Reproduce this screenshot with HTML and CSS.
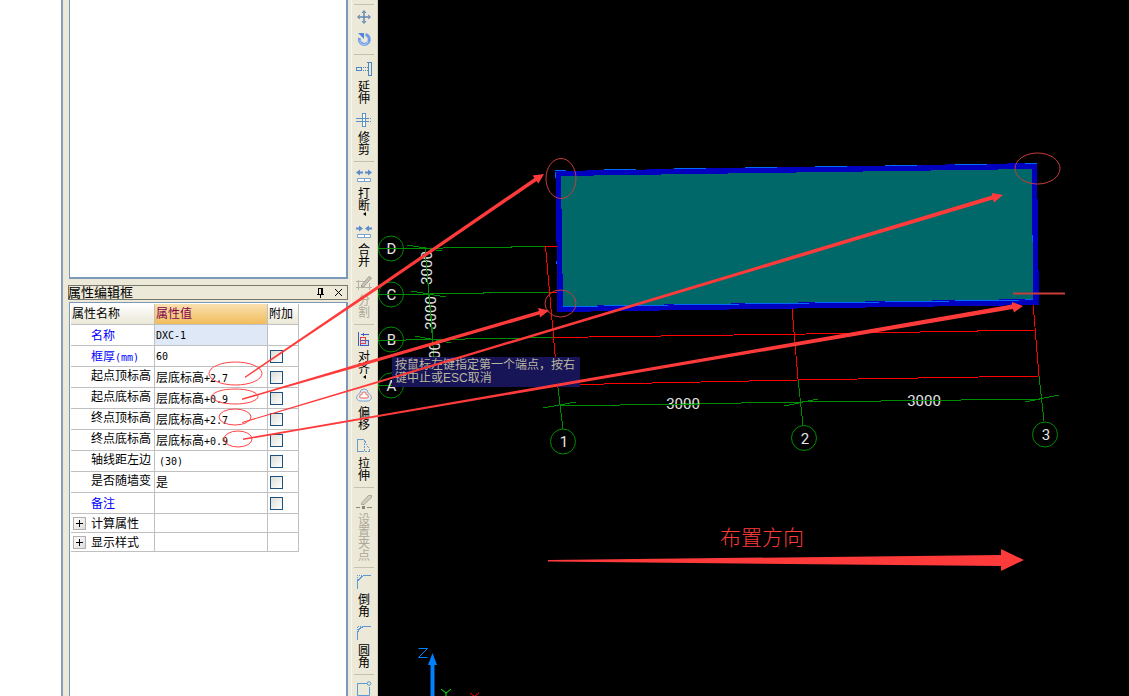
FILE: index.html
```html
<!DOCTYPE html>
<html lang="zh-CN">
<head>
<meta charset="utf-8">
<title>属性编辑框</title>
<link rel="stylesheet" href="styles.css">
</head>
<body>
<div class="app">
  <aside class="gutter"></aside>
  <section class="dock">
    <div class="list-panel"></div>
    <header class="panel-title">
      <h1>属性编辑框</h1>
      <button class="title-button" type="button" aria-label="固定"><svg width="9" height="10" viewBox="0 0 9 10" shape-rendering="crispEdges"><path d="M2 0h5v6h-1v-5h-3v5h-1zM5 1h1v5h-1zM1 6h7v1h-7zM4 7h1v3h-1z"/></svg></button>
      <button class="title-button" type="button" aria-label="关闭"><svg width="9" height="9" viewBox="0 0 9 9"><path d="M1 1l7 7M8 1l-7 7" stroke="#000"/></svg></button>
    </header>
    <div class="prop-panel">
      <table class="props">
        <colgroup><col class="col-name"><col class="col-value"><col class="col-extra"></colgroup>
        <thead><tr><th>属性名称</th><th class="active">属性值</th><th>附加</th></tr></thead>
        <tbody>
          <tr><td class="key link">名称</td><td class="selected mono">DXC-1</td><td></td></tr>
          <tr><td class="key link">框厚<span class="mono">(mm)</span></td><td class="mono">60</td><td><input type="checkbox" aria-label="框厚"></td></tr>
          <tr><td class="key raised">起点顶标高</td><td>层底标高<span class="mono">+2.7</span></td><td><input type="checkbox" aria-label="起点顶标高"></td></tr>
          <tr><td class="key raised">起点底标高</td><td>层底标高<span class="mono">+0.9</span></td><td><input type="checkbox" aria-label="起点底标高"></td></tr>
          <tr><td class="key raised">终点顶标高</td><td>层底标高<span class="mono">+2.7</span></td><td><input type="checkbox" aria-label="终点顶标高"></td></tr>
          <tr><td class="key raised">终点底标高</td><td>层底标高<span class="mono">+0.9</span></td><td><input type="checkbox" aria-label="终点底标高"></td></tr>
          <tr><td class="key raised">轴线距左边</td><td class="mono paren">(30)</td><td><input type="checkbox" aria-label="轴线距左边"></td></tr>
          <tr><td class="key raised">是否随墙变</td><td>是</td><td><input type="checkbox" aria-label="是否随墙变"></td></tr>
          <tr><td class="key link">备注</td><td></td><td><input type="checkbox" aria-label="备注"></td></tr>
          <tr class="group"><td><button type="button" class="expand" aria-label="展开计算属性"></button>计算属性</td><td></td><td></td></tr>
          <tr class="group"><td><button type="button" class="expand" aria-label="展开显示样式"></button>显示样式</td><td></td><td></td></tr>
        </tbody>
      </table>
    </div>
  </section>
  <nav class="tools" aria-label="修改">
    <div class="tool-group first">
      <button type="button" aria-label="移动"><svg width="16" height="16" viewBox="0 0 16 16" fill="none" stroke="#6287b4"><path d="M8 2v12M2 8h12" stroke-width="1.500"/><path d="M6 4l2-2.500 2 2.500M6 12l2 2.500 2-2.500M4 6l-2.500 2 2.500 2M12 6l2.500 2-2.500 2"/></svg></button>
      <button type="button" aria-label="旋转"><svg width="16" height="16" viewBox="0 0 16 16" fill="none"><path d="M3.500 7a5 5 0 1 0 6-3.500" stroke="#6e9bea" stroke-width="3"/><path d="M4 9a4 4 0 0 0 8 1" stroke="#b6d0fa"/><path d="M2 2h6v6z" fill="#5584d8"/></svg></button>
    </div>
    <div class="tool-group">
      <button type="button"><svg width="16" height="16" viewBox="0 0 16 16" fill="none" stroke="#4f88c0" shape-rendering="crispEdges"><path d="M0 6.500h6M0 9.500h6M.5 6v4M5.500 6v4M11 1.500h4.500v13H12.500V1.500"/><path d="M7 6.500h5M7 9.500h5" stroke-dasharray="1 1"/></svg><span>延伸</span></button>
      <button type="button"><svg width="16" height="16" viewBox="0 0 16 16" fill="none" stroke="#5b93c8" shape-rendering="crispEdges"><path d="M6.500 1.500h3v13h-3z" fill="#fff"/><path d="M0 6.500h12M0 9.500h12"/><path d="M12 6.500h4M12 9.500h4" stroke-dasharray="1 1"/></svg><span>修剪</span></button>
    </div>
    <div class="tool-group">
      <button type="button"><svg width="16" height="16" viewBox="0 0 16 16"><path d="M0 4.500l4-3v2h3v2H4v2zM16 4.500l-4-3v2H9v2h3v2z" fill="#5b8bcc"/><path d="M1.500 10.500h13v3h-13zM8.500 10.500v3" fill="#fff" stroke="#7ba3d2"/></svg><span>打断</span><i class="drop"></i></button>
      <button type="button"><svg width="16" height="16" viewBox="0 0 16 16"><path d="M7 4.500L3 1.500v2H0v2h3v2zM9 4.500l4-3v2h3v2h-3v2z" fill="#5b8bcc"/><path d="M1.500 10.500h13v3h-13zM8.500 10.500v3" fill="#fff" stroke="#7ba3d2"/></svg><span>合并</span></button>
      <button type="button" disabled><svg width="16" height="16" viewBox="0 0 16 16" fill="none" stroke="#b5b3a5"><path d="M0 6.500h9M0 12.500h16M2.500 5v10M13.500 8v7"/><path d="M5 11l8-9.500 2.500 1.500-8 9z" fill="#c9c7b9" stroke="#9d9b8f"/></svg><span>分割</span></button>
    </div>
    <div class="tool-group">
      <button type="button"><svg width="16" height="16" viewBox="0 0 16 16" fill="none" shape-rendering="crispEdges"><path d="M2.500 1v14M5 3.500h8M7.500 2v3M6.500 3v1" stroke="#3b5cc0"/><path d="M4.500 9.500h8v5h-8z" fill="#c9d8f2" stroke="#3b5cc0"/><path d="M4.500 6.500h5v6h-5z" stroke="#db4046"/></svg><span>对齐</span><i class="drop"></i></button>
      <button type="button"><svg width="16" height="16" viewBox="0 0 16 16"><path d="M4 6a4 4 0 0 1 8 0c5 3 4 8-1 8H5c-5 0-6-5-1-8z" fill="#eaf2fb" stroke="#78a3cf"/><path d="M6 7a2 2 0 0 1 4 0c3 1 3 4 1 4H5c-2 0-2-3 1-4z" fill="#fff" stroke="#f09080" stroke-width="1.500"/></svg><span>偏移</span></button>
      <button type="button"><svg width="16" height="16" viewBox="0 0 16 16" fill="none" stroke="#6c9cc9" shape-rendering="crispEdges"><path d="M8 1.500H1.500v12H8"/><path d="M8.500 2v12M9 3l5 10M9 13.500h6" stroke-dasharray="2 1"/></svg><span>拉伸</span></button>
    </div>
    <div class="tool-group">
      <button type="button" disabled><svg width="16" height="16" viewBox="0 0 16 16" fill="none" stroke="#aaa899"><path d="M5.500 9l7-7.500h3v2L8 10.500H5.500z" fill="#d0cec1"/><path d="M0 13.500h4M11 13.500h5" stroke="#88867a"/><path d="M6 12h3v3H6z" fill="#88867a" stroke="none"/></svg><span>设置夹点</span></button>
    </div>
    <div class="tool-group">
      <button type="button"><svg width="16" height="16" viewBox="0 0 16 16" fill="none" stroke="#5b9bd5" shape-rendering="crispEdges"><path d="M7 1.500h8M1.500 15V7l5-5"/><path d="M1.500 6V1.500H7" stroke-dasharray="1 1"/></svg><span>倒角</span></button>
      <button type="button"><svg width="16" height="16" viewBox="0 0 16 16" fill="none" stroke="#5b9bd5" shape-rendering="crispEdges"><path d="M15 1.500H9Q2 2 1.500 9v6"/><path d="M1.500 7V1.500H8" stroke-dasharray="1 1"/></svg><span>圆角</span></button>
    </div>
    <div class="tool-group">
      <button type="button" aria-label="矩形"><svg width="16" height="16" viewBox="0 0 16 16" fill="none" stroke="#5b9bd5"><path d="M11 2.500H1.500v12h12V6"/><circle cx="13" cy="2.500" r="1.800"/></svg></button>
    </div>
  </nav>
  <main class="viewport">
    <svg class="drawing" width="751" height="696" viewBox="378 0 751 696">
      <g class="axis" shape-rendering="crispEdges">
        <path d="M378 248.500L511 247.500L511 246.500H546M378 294.500L483 293.500V292.500H550M378 340.500L553 337.500M378 386L400 385M558 388L563 429M798 379L803 425M1039 376L1044 421M543 408L576 402M784 406L818 399M1025 402L1059 395M560 406L802 402L1041 399M407 245L442 251M411 291L446 297M415 336L451 343M425 247L434 358"/>
      </g>
      <g class="bubble"><circle cx="391" cy="248.500" r="12.500"/><circle cx="391" cy="294.500" r="12.500"/><circle cx="391" cy="339.500" r="12.500"/><circle cx="391" cy="385.500" r="12.500"/><circle cx="563" cy="441.500" r="12.500"/><circle cx="804" cy="438" r="12.500"/><circle cx="1045" cy="434.500" r="12.500"/></g>
      <path class="grid-red" shape-rendering="crispEdges" d="M545 246.500H557M545.500 246L558 388M792 308L798 379M1033 303L1039 376M553 337.500L806 334L1035 330M556 385L798 380L1039 376M550 292.500H560"/>
      <path class="wall" shape-rendering="crispEdges" d="M556 171L1037 163L1039 305L557 312Z"/>
      <path class="slab" shape-rendering="crispEdges" d="M561 176L1032 169L1033 299L563 306Z"/>
      <path class="wall-edge" shape-rendering="crispEdges" d="M555 170.500h11M604 169.500h32M674 168.500h32M745 167.500h32M815 166.500h32M885 165.500h32M955 164.500h32M1025 163.500h12M555.500 172v6M556.500 261v3M1032.500 235v7M563 306.500h35M604 305.500h64M674 304.500h65M745 303.500h64M815 302.500h64M885 301.500h64M955 300.500h64M1025 299.500h8"/>
      <g class="label bubble-label">
        <text x="391.500" y="254">D</text><text x="391.500" y="300">C</text><text x="391.500" y="345">B</text><text x="391.500" y="391">A</text>
        <text x="564" y="447">1</text><text x="805" y="444">2</text><text x="1046" y="440">3</text>
      </g>
      <g class="label">
        <text x="683" y="409">3000</text><text x="924" y="406">3000</text>
        <text transform="translate(432 268) rotate(-90)">3000</text><text transform="translate(436 313) rotate(-90)">3000</text><text transform="translate(440 359) rotate(-90)">3000</text>
      </g>
      <path class="axis" shape-rendering="crispEdges" d="M378 248.500H404M378 294.500H404M378 340.500H404M665 404.500H700M904 400.500H941M425 250L433 338"/>
      <g fill="none"><path d="M418.500 648.500h9l-9 9h9" stroke="#0080ff"/><path d="M432.500 696V662" stroke="#0080ff" stroke-width="4"/><path d="M428 665l4.500-12 4.500 12z" fill="#0080ff"/><path d="M441 689l5 4 5-4M446 693v3" stroke="#0f0"/><path d="M470 693l4 3M479 693l-4 3" stroke="#f00"/></g>
    </svg>
    <div class="hint" role="status">按鼠标左键指定第一个端点，按右键中止或ESC取消</div>
  </main>
  <svg class="notes" width="1129" height="696" viewBox="0 0 1129 696">
    <g class="rings"><ellipse cx="235.500" cy="373.500" rx="26.500" ry="11.500"/><ellipse cx="235" cy="396.500" rx="23" ry="7.500"/><ellipse cx="235" cy="417" rx="16" ry="8"/><ellipse cx="238" cy="439" rx="14" ry="8"/></g>
    <g class="rings faint"><ellipse cx="561" cy="178.500" rx="15" ry="20"/><ellipse cx="560.500" cy="303.500" rx="15.500" ry="13.500"/><ellipse cx="1037.500" cy="168.500" rx="22.500" ry="15.500"/></g>
    <path class="faint" d="M1013 293.500H1065" stroke-width="2"/>
    <g class="arrows">
      <path d="M245 376.500L378 285.500L534.500 178L532.500 175.500L544 174L538.500 183.500L536.500 181L379 288.500L245 378Z"/>
      <path d="M242 398.500L378 358L539 311L538 308L549 310.500L540 317.500L539.500 314.500L379 361L242 400Z"/>
      <path d="M242 422L378 381L992 195.500L992 193L1003 195L994 202.500L993 199.500L378 383L242 423Z"/>
      <path d="M243 438.500L378 415L1012 304.500L1012 302L1023 306L1014 312.500L1013 309L378 417L243 440Z"/>
      <path d="M548 560L1001 555V549L1024 560L1001 571V566L548 561.500Z"/>
    </g>
    <text class="direction" x="720" y="545">布置方向</text>
  </svg>
</div>
</body>
</html>
```
FILE: styles.css
```css
* { box-sizing: border-box; }
body { margin: 0; background: #fff; font-family: "Liberation Sans", "Noto Sans CJK SC", sans-serif; font-size: 12px; color: #000; }
button { margin: 0; padding: 0; border: 0; background: none; font: inherit; color: inherit; }
.app { position: relative; display: flex; height: 100vh; overflow: hidden; }
.gutter { flex: 0 0 61px; }
.dock { flex: 0 0 291px; display: flex; flex-direction: column; padding: 0 3px 0 5px; background: #ece9d8; border-left: 2px solid #8a9db5; border-right: 1px solid #f8f6ec; }
.list-panel { flex: 0 0 279px; margin-left: 1px; background: #fff; border: 1px solid #7a98b8; border-width: 0 2px 2px 1px; }
.panel-title { display: flex; align-items: center; gap: 9px; height: 15px; margin: 6px 0 2px; padding-right: 4px; border: 1px solid #77776d; }
.panel-title h1 { flex: 1; margin: 0 0 0 -1px; font-size: 13px; line-height: 13px; font-weight: 400; }
.title-button { display: flex; }
.prop-panel { flex: 1; margin-left: 1px; padding: 1px; background: #fff; border: 1px solid #7a98b8; border-width: 1px 2px 0 1px; }
.mono { font-family: "DejaVu Sans Mono", "Noto Sans CJK SC", monospace; font-size: 10px; }
.props { width: 228px; table-layout: fixed; border-collapse: separate; border-spacing: 0; line-height: 12px; }
.col-name { width: 84px; }
.col-value { width: 113px; }
.col-extra { width: 31px; }
.props th { height: 21px; padding: 0 1px; border: solid #c0c0c0; border-width: 0 1px 1px 0; background: linear-gradient(#fff, #ebe8d7); font-weight: 400; text-align: left; white-space: nowrap; }
.props th.active { background: linear-gradient(#fae0b0, #f0bd5c); color: #800050; }
.props td { height: 21px; padding: 2px 1px 0; border: solid #c0c0c0; border-width: 0 1px 1px 0; white-space: nowrap; vertical-align: middle; }
.props td:last-child { padding: 0 2px; }
.props .key { padding-left: 20px; }
.props .raised { padding-top: 0; padding-bottom: 3px; }
.props .link { color: #00f; }
.props .selected { background: #dfe8f6; }
.props .paren { padding-left: 4px; }
.props .group td { height: 19px; padding-top: 0; }
.props input { display: block; appearance: none; width: 13px; height: 13px; margin: 0; border: 1px solid #1c5180; background: linear-gradient(135deg, #dcdcd7, #fff); }
.expand { display: inline-grid; place-items: center; width: 13px; height: 13px; margin: 0 5px 0 1px; border: 1px solid #b0b0b0; background: linear-gradient(135deg, #fff, #ddd); vertical-align: 1px; }
.expand::before { content: ""; width: 7px; height: 7px; background: linear-gradient(#000, #000) center / 7px 1px no-repeat, linear-gradient(#000, #000) center / 1px 7px no-repeat; }
.tools { flex: 0 0 26px; display: flex; flex-direction: column; align-items: center; padding: 4px 1px 0 0; background: #ece9d8; border-right: 1px solid #d2ceba; overflow: hidden; }
.tool-group { flex: none; display: flex; flex-direction: column; align-items: center; gap: 7px; width: 20px; padding: 6px 0 5px; border-top: 1px solid #c5c2ae; }
.tool-group.first { gap: 6px; padding: 4px 0 7px; }
.tool-group button { display: flex; flex-direction: column; align-items: center; width: 16px; }
.tool-group svg { display: block; }
.tool-group span { width: 12px; padding-top: 4px; line-height: 12px; overflow-wrap: anywhere; }
.tool-group button:disabled { color: #aca899; }
.drop { margin-bottom: 1px; border: solid transparent; border-width: 2px 3px 2px 0; border-right-color: #000; }
.viewport { position: relative; flex: 1; overflow: hidden; background: #000; }
.drawing { display: block; }
.axis, .bubble { fill: none; stroke: #008c00; }
.grid-red { fill: none; stroke: #f00; }
.wall { fill: #0000c0; }
.slab { fill: #006868; }
.wall-edge { stroke: #0068ff; }
.label { fill: #e4e4e4; font: 15px Roboto, "Liberation Sans", sans-serif; text-anchor: middle; }
.bubble-label { font-size: 15px; }
.hint { position: absolute; left: 14px; top: 357px; width: 188px; padding: 2px 3px; background: #181458; color: #b8b8a0; line-height: 13px; }
.notes { position: absolute; left: 0; top: 0; pointer-events: none; }
.rings { fill: none; stroke: #f44; }
.faint { stroke: #c83c3c; }
.arrows { fill: #ff3a3a; }
.direction { fill: #ff3a3a; font: 300 21px "Noto Sans CJK SC", sans-serif; }
```
